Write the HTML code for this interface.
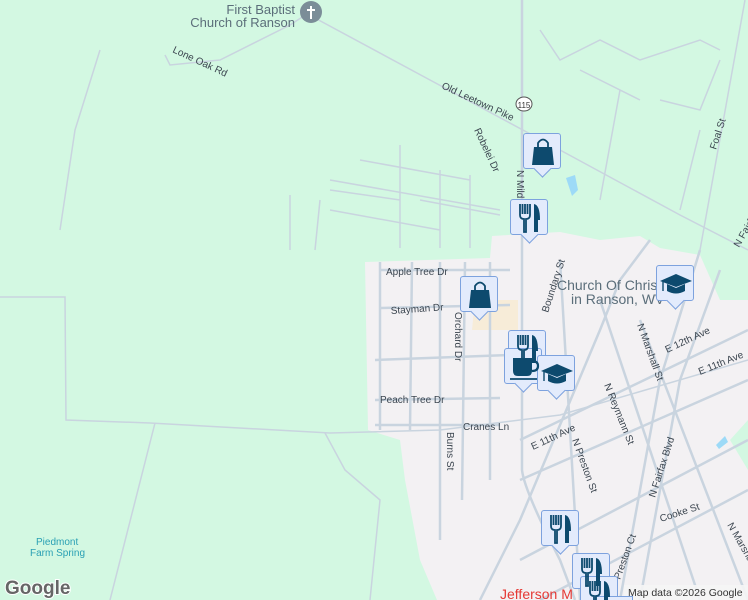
<!DOCTYPE html>
<html><head><meta charset="utf-8"><style>
html,body{margin:0;padding:0;width:748px;height:600px;overflow:hidden;background:#d3f8e2;font-family:"Liberation Sans",sans-serif}
#wrap{position:absolute;left:0;top:0;width:748px;height:600px;overflow:hidden}
svg text{font-family:"Liberation Sans",sans-serif}
.mk{position:absolute;width:38px;height:36px;background:#e3ebfc;border:1px solid #7da2de;border-radius:3px;box-sizing:border-box}
.mk:after{content:"";position:absolute;left:12px;bottom:-7px;width:12px;height:12px;background:#e3ebfc;border-right:1px solid #7da2de;border-bottom:1px solid #7da2de;transform:rotate(45deg)}
.mk svg{position:absolute;left:0;top:0;z-index:2}
</style></head><body><div id="wrap">
<svg width="748" height="600" style="position:absolute;left:0;top:0">
<path d="M365,262 L490,258 L492,236 L560,232 L600,240 L640,236 L660,248 L700,255 L720,300 L748,300 L748,420 L730,440 L748,470 L748,600 L437,600 L420,560 L405,480 L400,440 L368,430 L365,262Z" fill="#f3f1f3"/>
<path d="M475,300 L518,300 L518,330 L472,330Z" fill="#f7ecd8"/>
<g fill="none" stroke="#c9d4df" stroke-width="2.5">
<path d="M522,0 L522,470 Q524,490 560,560 L575,600"/>
<path d="M380,270 L510,270 M380,308 L510,305 M375,360 L510,355 M375,400 L500,398 M375,425 L500,425"/>
<path d="M380,262 L380,430 M412,262 L410,430 M440,262 L440,540 M465,262 L462,500 M490,262 L490,480"/>
<path d="M520,440 L748,330 M520,480 L748,380 M520,560 L748,440 M540,600 L748,490"/>
<path d="M600,300 L700,600 M640,320 L748,600 M700,250 L660,380 L620,600 M720,270 L680,380 L640,600"/>
<path d="M480,600 L520,520 L600,330 L620,280 L650,240 M560,260 L580,600"/>
</g>
<g fill="none" stroke="#c9d4df" stroke-width="1.5">
<path d="M300,10 L430,80 L560,150 L680,215 L748,250"/>
<path d="M0,297 L65,297 L66,420 L150,423 L330,433 L440,430 L560,415 L748,360"/>
<path d="M155,423 L110,600 M325,433 L345,470 L380,500 L370,600"/>
<path d="M420,200 L500,215 M330,190 L400,200 M330,180 L500,210 M360,160 L470,180 M330,210 L440,230 M400,145 L400,248 M440,170 L440,248 M470,175 L470,248 M290,195 L290,250 M320,200 L315,250"/>
<path d="M165,55 L170,65 L220,60 L290,25 L310,12 M100,50 L75,130 L60,230"/>
<path d="M540,30 L560,60 L600,40 L640,60 L700,40 L720,50 M580,70 L640,100 M620,90 L600,200 M660,100 L700,110 L720,60 M700,130 L680,210 M745,0 L700,250"/>
</g>
<path d="M566,178 L575,175 L578,190 L572,196Z" fill="#9ddaf7"/>
<path d="M716,445 L725,436 L728,442 L719,449Z" fill="#9ddaf7"/>
<ellipse cx="524" cy="104" rx="8" ry="7" fill="#fff" stroke="#555" stroke-width="1"/>
<text x="524" y="108" font-size="8" fill="#333" text-anchor="middle">115</text>
<text x="295" y="14" font-size="13" fill="#5b6e7a" text-anchor="end">First Baptist</text>
<text x="295" y="27" font-size="13" fill="#5b6e7a" text-anchor="end">Church of Ranson</text>
<circle cx="311" cy="12" r="11" fill="#7b8d98"/>
<path d="M311,6 L311,19 M307,10 L315,10" stroke="#fff" stroke-width="2"/>
<g font-size="10" fill="#3c4650">
<text x="172" y="52" transform="rotate(25 172 52)">Lone Oak Rd</text>
<text x="441" y="88" transform="rotate(25 441 88)">Old Leetown Pike</text>
<text x="474" y="130" transform="rotate(65 474 130)">Robelei Dr</text>
<text x="517" y="170" transform="rotate(90 517 170)">N Mildred St</text>
<text x="386" y="275">Apple Tree Dr</text>
<text x="391" y="314" transform="rotate(-4 391 314)">Stayman Dr</text>
<text x="455" y="312" transform="rotate(90 455 312)">Orchard Dr</text>
<text x="380" y="403">Peach Tree Dr</text>
<text x="463" y="430">Cranes Ln</text>
<text x="447" y="432" transform="rotate(90 447 432)">Burns St</text>
<text x="533" y="450" transform="rotate(-25 533 450)">E 11th Ave</text>
<text x="572" y="440" transform="rotate(70 572 440)">N Preston St</text>
<text x="604" y="385" transform="rotate(68 604 385)">N Reymann St</text>
<text x="637" y="325" transform="rotate(70 637 325)">N Marshall St</text>
<text x="667" y="353" transform="rotate(-25 667 353)">E 12th Ave</text>
<text x="700" y="375" transform="rotate(-22 700 375)">E 11th Ave</text>
<text x="655" y="498" transform="rotate(-72 655 498)">N Fairfax Blvd</text>
<text x="661" y="522" transform="rotate(-18 661 522)">Cooke St</text>
<text x="620" y="580" transform="rotate(-70 620 580)">Preston Ct</text>
<text x="716" y="150" transform="rotate(-72 716 150)">Foal St</text>
<text x="739" y="248" transform="rotate(-60 739 248)">N Fairfax</text>
<text x="548" y="313" transform="rotate(-72 548 313)">Boundary St</text>
<text x="727" y="525" transform="rotate(60 727 525)">N Marshall</text>
</g>
<text x="557" y="290" font-size="14" fill="#5b6e7a">Church Of Christ</text>
<text x="571" y="304" font-size="14" fill="#5b6e7a">in Ranson, WV</text>
<text x="36" y="545" font-size="10" fill="#2aa0b4">Piedmont</text>
<text x="30" y="556" font-size="10" fill="#2aa0b4">Farm Spring</text>
<text x="500" y="599" font-size="14" fill="#e53935">Jefferson M</text>
<text x="5" y="594" font-size="19" font-weight="bold" fill="#666" stroke="#fff" stroke-width="2" paint-order="stroke">Google</text>
<rect x="624" y="585" width="124" height="15" fill="#f5f5f5" opacity="0.9"/>
<text x="628" y="596" font-size="10.5" fill="#333">Map data ©2026 Google</text>
</svg>

<div class="mk" style="left:523px;top:133px"><svg width="38" height="36"><path d="M10,13 L28,13 L30,31 L8,31Z" fill="#0d4a6e"/><path d="M14,14 L14,9 Q19,2 24,9 L24,14" fill="none" stroke="#0d4a6e" stroke-width="1.8"/></svg></div>
<div class="mk" style="left:510px;top:199px"><svg width="38" height="36"><path d="M9,4 L9,15 Q9,19 13,19 L13,32 L15,32 L15,19 Q19,19 19,15 L19,4 M11.5,4 L11.5,14 M14,4 L14,14 M16.5,4 L16.5,14" fill="none" stroke="#0d4a6e" stroke-width="1.8"/><path d="M23,4 Q29,5 29,20 L27,20 L27,32 L23,32Z" fill="#0d4a6e"/></svg></div>
<div class="mk" style="left:656px;top:265px"><svg width="38" height="36"><path d="M3,15 L19,8 L35,15 L19,21Z" fill="#0d4a6e"/><path d="M10,18 L10,25 Q19,30 28,25 L28,18 L19,22Z" fill="#0d4a6e"/><path d="M6,16 L6,25" stroke="#0d4a6e" stroke-width="1.4"/></svg></div>
<div class="mk" style="left:460px;top:276px"><svg width="38" height="36"><path d="M10,13 L28,13 L30,31 L8,31Z" fill="#0d4a6e"/><path d="M14,14 L14,9 Q19,2 24,9 L24,14" fill="none" stroke="#0d4a6e" stroke-width="1.8"/></svg></div>
<div class="mk" style="left:508px;top:330px"><svg width="38" height="36"><path d="M9,4 L9,15 Q9,19 13,19 L13,32 L15,32 L15,19 Q19,19 19,15 L19,4 M11.5,4 L11.5,14 M14,4 L14,14 M16.5,4 L16.5,14" fill="none" stroke="#0d4a6e" stroke-width="1.8"/><path d="M23,4 Q29,5 29,20 L27,20 L27,32 L23,32Z" fill="#0d4a6e"/></svg></div>
<div class="mk" style="left:504px;top:348px"><svg width="38" height="36"><path d="M8,9 L27,9 L27,22 Q27,27 22,27 L13,27 Q8,27 8,22Z" fill="#0d4a6e"/><path d="M27,12 Q33,12 33,17 Q33,22 27,22" fill="none" stroke="#0d4a6e" stroke-width="2.2"/><path d="M5,30 L32,30" stroke="#0d4a6e" stroke-width="1.8"/></svg></div>
<div class="mk" style="left:537px;top:355px"><svg width="38" height="36"><path d="M3,15 L19,8 L35,15 L19,21Z" fill="#0d4a6e"/><path d="M10,18 L10,25 Q19,30 28,25 L28,18 L19,22Z" fill="#0d4a6e"/><path d="M6,16 L6,25" stroke="#0d4a6e" stroke-width="1.4"/></svg></div>
<div class="mk" style="left:541px;top:510px"><svg width="38" height="36"><path d="M9,4 L9,15 Q9,19 13,19 L13,32 L15,32 L15,19 Q19,19 19,15 L19,4 M11.5,4 L11.5,14 M14,4 L14,14 M16.5,4 L16.5,14" fill="none" stroke="#0d4a6e" stroke-width="1.8"/><path d="M23,4 Q29,5 29,20 L27,20 L27,32 L23,32Z" fill="#0d4a6e"/></svg></div>
<div class="mk" style="left:572px;top:553px"><svg width="38" height="36"><path d="M9,4 L9,15 Q9,19 13,19 L13,32 L15,32 L15,19 Q19,19 19,15 L19,4 M11.5,4 L11.5,14 M14,4 L14,14 M16.5,4 L16.5,14" fill="none" stroke="#0d4a6e" stroke-width="1.8"/><path d="M23,4 Q29,5 29,20 L27,20 L27,32 L23,32Z" fill="#0d4a6e"/></svg></div>
<div class="mk" style="left:580px;top:576px;height:24px;border-bottom:none;border-radius:3px 3px 0 0"><svg width="38" height="24"><path d="M9,4 L9,15 Q9,19 13,19 L13,24 L15,24 L15,19 Q19,19 19,15 L19,4 M11.5,4 L11.5,14 M14,4 L14,14 M16.5,4 L16.5,14" fill="none" stroke="#0d4a6e" stroke-width="1.8"/><path d="M23,4 Q29,5 29,20 L27,20 L27,24 L23,24Z" fill="#0d4a6e"/></svg></div>
<div style="position:absolute;left:595px;top:596px;width:38px;height:4px;background:#e3ebfc;border:1px solid #7da2de;border-bottom:none;box-sizing:border-box"></div>
</div></body></html>
